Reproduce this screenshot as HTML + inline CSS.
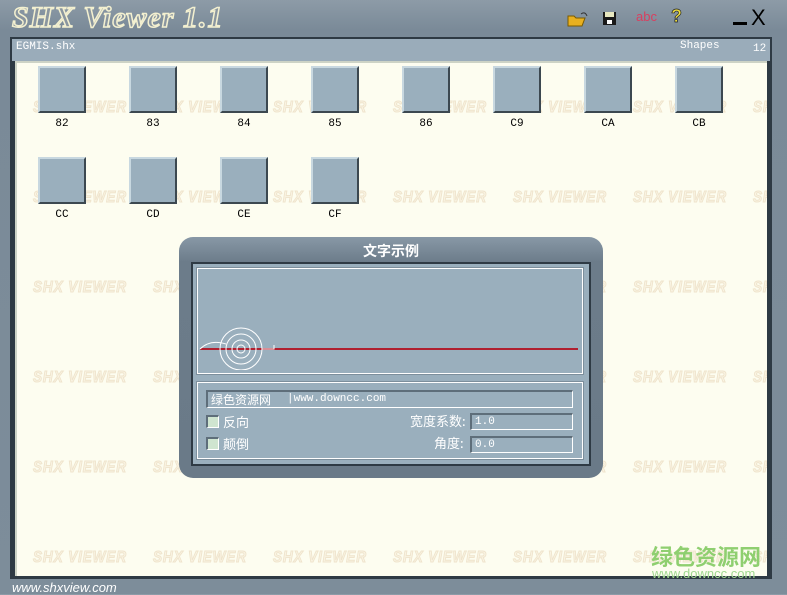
<!DOCTYPE html>
<html><head><meta charset="utf-8"><style>
*{margin:0;padding:0;box-sizing:border-box}
body{width:787px;height:594px;overflow:hidden;position:relative;background:linear-gradient(#8d9ba7,#7a8a98 30px,#7d8d9a);font-family:"Liberation Mono","SimSun","Noto Sans CJK SC",monospace}
.abs{position:absolute}
.title{left:12px;top:1px;font:italic bold 30px "Liberation Serif",serif;color:#8a96a0;-webkit-text-stroke:1.5px #f3f0d0;letter-spacing:1px}
.panel{left:10px;top:37px;width:762px;height:542px;background:#2e3a44}
.hdr{left:12px;top:39px;width:758px;height:22px;background:#9aacba;color:#fff;font-size:11px}
.content{left:15px;top:61px;width:752px;height:515px;background:#fdfdf0;border-top:2px solid #cdd3c6;border-left:2px solid #cdd3c6;overflow:hidden}
.wm{position:absolute;font:bold italic 16px "Liberation Sans",sans-serif;color:#faf4e4;-webkit-text-stroke:1px #efe4cc;letter-spacing:1px;white-space:nowrap;transform:scaleX(.85);transform-origin:left}
.tile{position:absolute;width:48px;height:47px;background:#9aafbd;border-top:2px solid #c8d8e0;border-left:2px solid #c8d8e0;border-right:2px solid #3c4850;border-bottom:2px solid #3c4850}
.lbl{position:absolute;width:48px;text-align:center;font-size:11px;color:#000}
.dlg{left:179px;top:237px;width:424px;height:241px;border-radius:14px;background:linear-gradient(#8898a6,#6c7c8a 25px,#6a7a88);}
.inner{left:191px;top:262px;width:400px;height:204px;background:#9aafbd;border:2px solid #2e3a44}
.box{position:absolute;border:1px solid #fff;outline:1px solid #7d8f9c}
.inp{position:absolute;background:#9aafbd;border-top:2px solid #5e6e7a;border-left:2px solid #5e6e7a;border-right:1px solid #fff;border-bottom:1px solid #fff;font-size:11px;color:#fff;padding-left:3px;line-height:15px}
.cb{position:absolute;width:13px;height:13px;background:#cfe5d0;border-top:2px solid #5e6e7a;border-left:2px solid #5e6e7a;border-right:1px solid #fff;border-bottom:1px solid #fff}
.cn{position:absolute;font:13px "Noto Sans CJK SC",sans-serif;color:#fff}
</style></head><body>
<div class="abs title">SHX Viewer 1.1</div>
<svg class="abs" style="left:567px;top:11px" width="22" height="16"><path d="M1 5h6l2 2h9l-3 8H1z" fill="#e8b020" stroke="#7a5a00"/><path d="M14 3q4-3 6 2" stroke="#333" fill="none"/></svg>
<svg class="abs" style="left:602px;top:11px" width="15" height="15"><rect x="1" y="1" width="13" height="13" fill="#1a1a1a"/><rect x="3" y="1" width="9" height="5" fill="#e8e8c0"/><rect x="5" y="9" width="5" height="4" fill="#fff"/></svg>
<div class="abs" style="left:636px;top:9px;font:13px 'Liberation Sans',sans-serif;color:#d84060">abc</div>
<div class="abs" style="left:671px;top:6px;font:bold 18px 'Liberation Sans',sans-serif;color:#f0e040;-webkit-text-stroke:.7px #222">?</div>
<div class="abs" style="left:733px;top:22px;width:14px;height:3px;background:#000"></div>
<div class="abs" style="left:751px;top:5px;font:22px 'Liberation Sans',sans-serif;color:#000">X</div>
<div class="abs panel"></div>
<div class="abs hdr"><span class="abs" style="left:4px;top:2px">EGMIS.shx</span><span class="abs" style="left:668px;top:1px">Shapes</span><span class="abs" style="left:741px;top:4px">12</span></div>
<div class="abs content">
<div class="wm" style="left:16px;top:36px">SHX VIEWER</div><div class="wm" style="left:136px;top:36px">SHX VIEWER</div><div class="wm" style="left:256px;top:36px">SHX VIEWER</div><div class="wm" style="left:376px;top:36px">SHX VIEWER</div><div class="wm" style="left:496px;top:36px">SHX VIEWER</div><div class="wm" style="left:616px;top:36px">SHX VIEWER</div><div class="wm" style="left:736px;top:36px">SHX VIEWER</div>
<div class="wm" style="left:16px;top:126px">SHX VIEWER</div><div class="wm" style="left:136px;top:126px">SHX VIEWER</div><div class="wm" style="left:256px;top:126px">SHX VIEWER</div><div class="wm" style="left:376px;top:126px">SHX VIEWER</div><div class="wm" style="left:496px;top:126px">SHX VIEWER</div><div class="wm" style="left:616px;top:126px">SHX VIEWER</div><div class="wm" style="left:736px;top:126px">SHX VIEWER</div>
<div class="wm" style="left:16px;top:216px">SHX VIEWER</div><div class="wm" style="left:136px;top:216px">SHX VIEWER</div><div class="wm" style="left:256px;top:216px">SHX VIEWER</div><div class="wm" style="left:376px;top:216px">SHX VIEWER</div><div class="wm" style="left:496px;top:216px">SHX VIEWER</div><div class="wm" style="left:616px;top:216px">SHX VIEWER</div><div class="wm" style="left:736px;top:216px">SHX VIEWER</div>
<div class="wm" style="left:16px;top:306px">SHX VIEWER</div><div class="wm" style="left:136px;top:306px">SHX VIEWER</div><div class="wm" style="left:256px;top:306px">SHX VIEWER</div><div class="wm" style="left:376px;top:306px">SHX VIEWER</div><div class="wm" style="left:496px;top:306px">SHX VIEWER</div><div class="wm" style="left:616px;top:306px">SHX VIEWER</div><div class="wm" style="left:736px;top:306px">SHX VIEWER</div>
<div class="wm" style="left:16px;top:396px">SHX VIEWER</div><div class="wm" style="left:136px;top:396px">SHX VIEWER</div><div class="wm" style="left:256px;top:396px">SHX VIEWER</div><div class="wm" style="left:376px;top:396px">SHX VIEWER</div><div class="wm" style="left:496px;top:396px">SHX VIEWER</div><div class="wm" style="left:616px;top:396px">SHX VIEWER</div><div class="wm" style="left:736px;top:396px">SHX VIEWER</div>
<div class="wm" style="left:16px;top:486px">SHX VIEWER</div><div class="wm" style="left:136px;top:486px">SHX VIEWER</div><div class="wm" style="left:256px;top:486px">SHX VIEWER</div><div class="wm" style="left:376px;top:486px">SHX VIEWER</div><div class="wm" style="left:496px;top:486px">SHX VIEWER</div><div class="wm" style="left:616px;top:486px">SHX VIEWER</div><div class="wm" style="left:736px;top:486px">SHX VIEWER</div>
<div class="tile" style="left:21px;top:3px"></div><div class="lbl" style="left:21px;top:55px">82</div>
<div class="tile" style="left:112px;top:3px"></div><div class="lbl" style="left:112px;top:55px">83</div>
<div class="tile" style="left:203px;top:3px"></div><div class="lbl" style="left:203px;top:55px">84</div>
<div class="tile" style="left:294px;top:3px"></div><div class="lbl" style="left:294px;top:55px">85</div>
<div class="tile" style="left:385px;top:3px"></div><div class="lbl" style="left:385px;top:55px">86</div>
<div class="tile" style="left:476px;top:3px"></div><div class="lbl" style="left:476px;top:55px">C9</div>
<div class="tile" style="left:567px;top:3px"></div><div class="lbl" style="left:567px;top:55px">CA</div>
<div class="tile" style="left:658px;top:3px"></div><div class="lbl" style="left:658px;top:55px">CB</div>
<div class="tile" style="left:21px;top:94px"></div><div class="lbl" style="left:21px;top:146px">CC</div>
<div class="tile" style="left:112px;top:94px"></div><div class="lbl" style="left:112px;top:146px">CD</div>
<div class="tile" style="left:203px;top:94px"></div><div class="lbl" style="left:203px;top:146px">CE</div>
<div class="tile" style="left:294px;top:94px"></div><div class="lbl" style="left:294px;top:146px">CF</div>
</div>
<div class="abs" style="left:651px;top:540px;font:bold 22px 'Noto Sans CJK SC',sans-serif;color:#8fcf70">绿色资源网</div>
<div class="abs" style="left:652px;top:566px;font:13px 'Liberation Sans',sans-serif;color:#a0d890">www.downcc.com</div>
<div class="abs" style="left:12px;top:580px;font:italic 13px 'Liberation Sans',sans-serif;color:#fff">www.shxview.com</div>
<div class="abs dlg"></div>
<div class="abs" style="left:179px;top:241px;width:424px;text-align:center;font:bold 14px 'Noto Sans CJK SC',sans-serif;color:#fff">文字示例</div>
<div class="abs inner"></div>
<div class="box" style="left:197px;top:268px;width:386px;height:106px"></div>
<svg class="abs" style="left:198px;top:320px" width="384" height="50"><line x1="2" y1="29" x2="380" y2="29" stroke="#b02030" stroke-width="2"/><g fill="none" stroke="#fff"><circle cx="43" cy="29" r="21"/><circle cx="43" cy="29" r="15"/><circle cx="43" cy="29" r="9"/><circle cx="43" cy="29" r="4"/><path d="M2 29q10-10 26-5M64 29h12v-4"/></g></svg>
<div class="box" style="left:197px;top:382px;width:386px;height:77px"></div>
<div class="inp" style="left:206px;top:390px;width:367px;height:18px"><span style="font-family:'Noto Sans CJK SC',sans-serif;font-size:12px">绿色资源网</span><span style="position:absolute;left:79px;top:0;color:#fff">|www.downcc.com</span></div>
<div class="cb" style="left:206px;top:415px"></div><div class="cn" style="left:223px;top:412px">反向</div>
<div class="cb" style="left:206px;top:437px"></div><div class="cn" style="left:223px;top:434px">颠倒</div>
<div class="cn" style="left:410px;top:411px">宽度系数:</div>
<div class="inp" style="left:470px;top:413px;width:103px;height:17px">1.0</div>
<div class="cn" style="left:434px;top:433px">角度:</div>
<div class="inp" style="left:470px;top:436px;width:103px;height:17px">0.0</div>
</body></html>
